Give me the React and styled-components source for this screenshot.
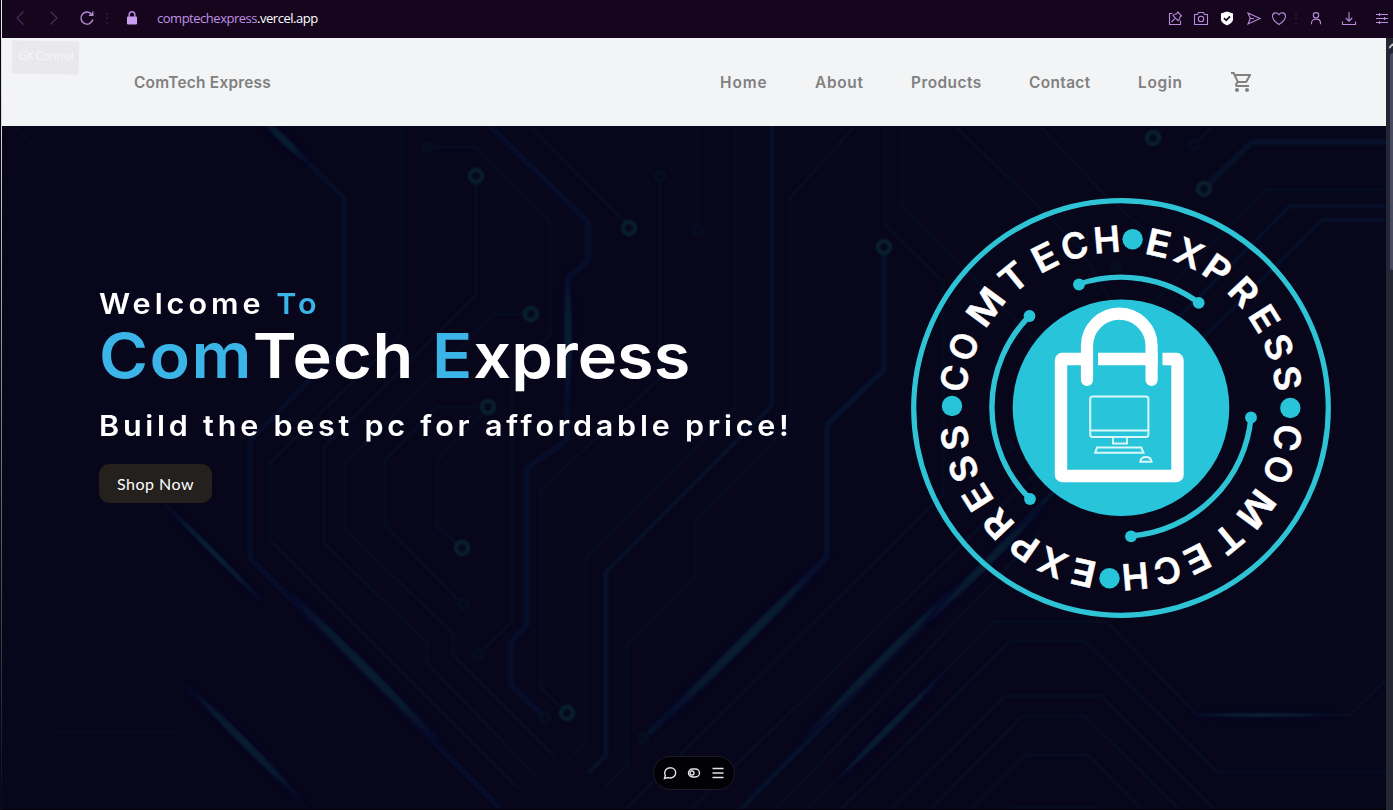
import React from "react";
import styled, { createGlobalStyle } from "styled-components";
import { MdOutlineShoppingCart } from "react-icons/md";

const GlobalStyle = createGlobalStyle`
  * { box-sizing: border-box; }
  body { margin: 0; background: #06051a; overflow: hidden; }
`;

const Window = styled.div`
  display: grid;
  grid-template-columns: 2px 1fr;
  width: 1393px;
  height: 810px;
  overflow: hidden;
  font-family: Inter, "Liberation Sans", sans-serif;
`;

const WindowEdge = styled.div`
  border-left: 1px solid #0b0614;
  background: linear-gradient(#e9e6ee 0, #d8d6dc 15%, #77757e 55%, #3b3944 80%, #0b0916 100%);
`;

const Browser = styled.div`
  display: flex;
  flex-direction: column;
  min-width: 0;
`;

const AddressBar = styled.header`
  display: flex;
  align-items: center;
  height: 38px;
  padding: 0 3px 2px 9.5px;
  background: #15061d;
`;

const BarIcon = styled.svg`
  flex: none;
  width: 16px;
  height: 16px;
  margin-left: ${(p) => p.$gap || 0}px;
  fill: none;
  stroke: ${(p) => p.$color || "#b88bdd"};
  stroke-width: 1.1;
`;

const Dots = styled.span`
  flex: none;
  width: 2px;
  height: 11px;
  margin-left: ${(p) => p.$gap}px;
  background: repeating-linear-gradient(#2c1040 0 2px, transparent 2px 4.5px);
`;

const Address = styled.div`
  flex: 1;
  margin-left: 17px;
  font: 400 13px/18px "Open Sans", "Noto Sans", sans-serif;
  letter-spacing: -0.48px;
  color: #c08fe6;
`;

const Domain = styled.span`
  color: #fff;
`;

const Viewport = styled.div`
  display: grid;
  grid-template-columns: 1384px 7px;
  flex: 1;
  min-height: 0;
`;

const Page = styled.div`
  position: relative;
  display: flex;
  flex-direction: column;
`;

const Scrollbar = styled.div`
  display: flex;
  flex-direction: column;
  align-items: flex-end;
  background: #232633;
`;

const ScrollArrow = styled.svg`
  width: 4px;
  height: 15px;
  fill: none;
  stroke: #c9c8c4;
  stroke-width: 1.8;
`;

const ScrollThumb = styled.div`
  width: 3px;
  height: 217px;
  border-radius: 3px 0 0 3px;
  background: #494b63;
`;

const Tooltip = styled.div`
  position: absolute;
  top: 3px;
  left: 10px;
  width: 67px;
  height: 33px;
  padding: 7px 6px;
  background: #e9e8ec;
  color: #f7f6f8;
  font: 400 12px/16px "Open Sans", sans-serif;
  letter-spacing: -0.5px;
  white-space: nowrap;
  transform: rotate(1deg);
`;

const NavBar = styled.nav`
  display: flex;
  align-items: center;
  justify-content: space-between;
  height: 88px;
  padding: 0 132px;
  background: #f3f4f6;
  color: #808080;
  font-size: 15.4px;
  font-weight: 600;
`;

const Brand = styled.div`
  letter-spacing: 0.25px;
`;

const Links = styled.div`
  display: flex;
  align-items: center;
  gap: 48px;
`;

const NavLink = styled.a`
  width: ${(p) => p.$width}px;
  white-space: nowrap;
  letter-spacing: ${(p) => p.$track}px;
`;

const Hero = styled.main`
  position: relative;
  display: flex;
  justify-content: space-between;
  flex: 1;
  padding: 70px 53px 0 97px;
  background: #07061a;
  border-bottom: 1px solid #030208;
  overflow: hidden;
`;

const Circuit = styled.svg`
  position: absolute;
  inset: 0;
  width: 1384px;
  height: 684px;
  fill: none;
  stroke: #080e24;
  stroke-width: 3;
  stroke-linejoin: round;
`;

const Intro = styled.section`
  position: relative;
  display: flex;
  flex-direction: column;
  align-items: flex-start;
  padding-top: 88px;
  color: #fff;
  font-weight: 600;
  white-space: nowrap;
`;

const Subheading = styled.p`
  margin: 0;
  font-size: 28.6px;
  line-height: 40px;
  letter-spacing: ${(p) => p.$track}px;
  transform: scaleX(1.067);
  transform-origin: left;
`;

const Title = styled.h1`
  margin: -1px 0 17px;
  font-size: 62.4px;
  line-height: 66px;
  font-weight: 600;
  letter-spacing: 0.9px;
  transform: scaleX(1.067);
  transform-origin: left;
`;

const Accent = styled.span`
  color: #3bb4e7;
  letter-spacing: ${(p) => (p.$wide ? "1.35px" : "inherit")};
`;

const Tight = styled.span`
  letter-spacing: 0;
`;

const ShopButton = styled.button`
  width: 113px;
  height: 39px;
  margin-top: 18px;
  padding: 0;
  border: 0;
  border-radius: 10px;
  background: #24201e;
  color: #fff;
  font: 400 16px Lato, sans-serif;
  letter-spacing: 0.5px;
`;

const Emblem = styled.svg`
  position: relative;
  flex: none;
  width: 424px;
  height: 424px;
`;

const RingLetter = styled.text`
  font: 600 36px Inter, sans-serif;
  fill: #fff;
  stroke: #fff;
  stroke-width: 0.5;
  stroke-linejoin: round;
  text-anchor: middle;
`;

const Toolbar = styled.div`
  position: absolute;
  left: 651px;
  bottom: 20px;
  display: flex;
  align-items: center;
  justify-content: center;
  gap: 10px;
  width: 82px;
  height: 34px;
  border: 1px solid #1d1b2a;
  border-radius: 17px;
  background: #020105;
`;

const ToolIcon = styled.svg`
  width: 14px;
  height: 14px;
  fill: none;
  stroke: #e4e4e4;
  stroke-width: 1.4;
`;

const TRACES = [
  { d: "M15 126L128 238V468L163 503L470 810", c: "#070b20" },
  { d: "M270 126L344 198V345L250 440V558L500 808", c: "#070e2a", w: 5 },
  { d: "M402 126V333L270 463V540L520 790" },
  { d: "M432 147H475L550 222V335L512 373V622L482 651" },
  { d: "M476 182V295L324 447V543L427 643V663L538 778" },
  { d: "M525 314H495L345 464V530L453 633V655L555 757" },
  { d: "M482 407H437L385 460V525L458 600" },
  { d: "M490 407L437 460V527L458 544" },
  { d: "M490 126L588 222V260L567 280V440L527 468V625L511 642V685L542 715", c: "#070e2a", w: 6 },
  { d: "M530 126L625 222" },
  { d: "M660 182V378L541 490V688L562 708" },
  { d: "M698 126V224" },
  { d: "M735 126V408L586 557V742L573 755" },
  { d: "M772 126V405L606 572V755L588 773", c: "#07122a", w: 4.5 },
  { d: "M855 126L790 198V425L695 520V577L627 645V765L605 788" },
  { d: "M884 253V370L827 425V557L648 734", c: "#06122c", w: 6 },
  { d: "M885 126V225L943 282V494L625 810" },
  { d: "M902 126V207L1090 395" },
  { d: "M955 126L1078 245L1110 300" },
  { d: "M1040 126L1100 190L1145 230" },
  { d: "M1090 420L690 810" },
  { d: "M1085 460L740 810", c: "#06122c", w: 5 },
  { d: "M1040 533L775 810" },
  { d: "M805 812L993 622H1107L1197 715H1350L1386 680" },
  { d: "M840 810L1010 641H1085L1217 772H1386", c: "#070e25" },
  { d: "M890 810L1005 696H1101L1215 810" },
  { d: "M930 810L1022 716H1085L1180 810" },
  { d: "M970 810L1025 755H1088L1142 810" },
  { d: "M1010 807H1095" },
  { d: "M1157 134L1165 126" },
  { d: "M1198 141L1213 126" },
  { d: "M1209 184L1252 142H1386", c: "#07122a", w: 6 },
  { d: "M1386 190H1265L1040 415" },
  { d: "M1386 206H1290L1050 446", c: "#07102a", w: 4 },
  { d: "M1386 220H1322L1140 400", c: "#07102a", w: 4 },
  { d: "M2 616H115L310 812", c: "#070a20" },
  { d: "M50 732H178L255 810", c: "#070a1d" },
];

const PADS = [
  [427, 147, 0], [476, 176, 1], [629, 228, 1], [660, 176, 0], [698, 230, 0],
  [531, 314, 1], [488, 407, 1], [462, 548, 1], [463, 604, 0], [478, 654, 0],
  [545, 718, 0], [567, 713, 1], [643, 738, 0], [884, 247, 1], [1153, 138, 1],
  [1194, 145, 0], [1204, 189, 1], [1008, 447, 0], [1116, 266, 0],
];

const GLOWS = [
  [213, 552, 62, 3, 45], [365, 668, 105, 4.5, 45], [245, 743, 75, 4, 45],
  [284, 140, 28, 4, 44], [568, 335, 60, 4, 90], [745, 640, 110, 5, -45],
  [880, 662, 105, 4, -45], [985, 565, 75, 4, -45], [890, 727, 70, 3.5, -45], [1262, 715, 65, 2.2, 0],
];

function Traces() {
  return (
    <Circuit viewBox="2 126 1384 684" aria-hidden="true">
      <defs>
        <filter id="soften" x="-5%" y="-5%" width="110%" height="110%" colorInterpolationFilters="sRGB">
          <feGaussianBlur stdDeviation="1" />
        </filter>
        <filter id="haze" filterUnits="userSpaceOnUse" x="-150" y="-20" width="300" height="40" colorInterpolationFilters="sRGB">
          <feGaussianBlur stdDeviation="2.5" />
        </filter>
        <radialGradient id="beam">
          <stop offset="0" stopColor="#08202f" />
          <stop offset="0.55" stopColor="#081b2e" stopOpacity="0.85" />
          <stop offset="1" stopColor="#07102c" stopOpacity="0" />
        </radialGradient>
      </defs>
      <g filter="url(#soften)">
        {TRACES.map((t) => (
          <path key={t.d} d={t.d} stroke={t.c} strokeWidth={t.w} />
        ))}
      </g>
      {GLOWS.map(([x, y, rx, ry, a]) => (
        <g key={`${x}-${y}`} transform={`translate(${x} ${y}) rotate(${a})`} stroke="none">
          <ellipse rx={rx * 1.1} ry={ry * 1.7} fill="#06042c" opacity="0.45" filter="url(#haze)" />
          <ellipse rx={rx * 1.15} ry={ry * 1.3} fill="url(#beam)" />
        </g>
      ))}
      <g filter="url(#soften)">
        {PADS.map(([x, y, lit]) => (
          <circle key={`${x}-${y}`} cx={x} cy={y} r={lit ? 6.2 : 5} fill="#050a1b"
            stroke={lit ? "#0a2032" : "#090f26"} strokeWidth={lit ? 4 : 2.5} />
        ))}
      </g>
    </Circuit>
  );
}

// Letter, angle in degrees clockwise from the top, horizontal stretch.
const HALF_RING = [
  ["C", -79.8, 1], ["O", -68.6, 0.98], ["M", -53.2, 1.14], ["T", -39.4, 1.08], ["E", -26.8, 1.12],
  ["C", -16, 1], ["H", -4.8, 1], ["E", 12.8, 1.12], ["X", 23.9, 1.05], ["P", 34.8, 1.08],
  ["R", 46.6, 1.08], ["E", 58, 1.1], ["S", 68.8, 1.05], ["S", 79.8, 1.05],
];

function Logo() {
  return (
    <Emblem viewBox="909 196 424 424" role="img" aria-label="ComTech Express">
      <circle cx="1121" cy="408" r="207.3" fill="none" stroke="#2ec4d6" strokeWidth="5.2" />
      <g fill="none" stroke="#2ec4d6" strokeWidth="5.4">
        <path d="M1079 284A131 131 0 0 1 1199 303" />
        <path d="M1029.500 316A129.500 129.500 0 0 0 1030 499" />
        <path d="M1251 417A131 131 0 0 1 1131 536" />
      </g>
      <g fill="#28c5da">
        {[[1079, 284.5], [1198.7, 302.8], [1029.5, 316], [1030, 499], [1251, 417.5], [1131, 536.3]].map(([x, y]) => (
          <circle key={x} cx={x} cy={y} r="5.900" />
        ))}
        {[[1132.6, 239.3], [1290.3, 408], [1109.5, 578.3], [952, 406]].map(([x, y]) => (
          <circle key={x} cx={x} cy={y} r="10.200" />
        ))}
        <circle cx="1121" cy="407.700" r="108.300" />
      </g>
      {[0, 180].map((turn) =>
        HALF_RING.map(([letter, angle, stretch]) => (
          <RingLetter
            key={turn + angle}
            transform={`translate(1121 408) rotate(${turn + angle}) translate(0 -156) scale(${stretch} 1)`}
          >
            {letter}
          </RingLetter>
        ))
      )}
      <rect x="1061" y="359" width="116.500" height="117" rx="1" fill="none" stroke="#fff" strokeWidth="12.400" strokeLinejoin="round" />
      <path d="M1095.500 350V368M1160 350V368" stroke="#28c5da" strokeWidth="5" />
      <path d="M1087 380V346A32.300 32.300 0 0 1 1151.600 346V380" fill="none" stroke="#fff" strokeWidth="12.200" strokeLinecap="round" />
      <g fill="none" stroke="#d9f8fb" strokeWidth="2">
        <rect x="1090.200" y="396.500" width="58.200" height="40.500" rx="2.500" />
        <path d="M1090 430.500H1148.500M1113 437.500V443.500H1127V437.500M1097 447.500H1141.300L1143.500 452.800H1095.200Z" />
        <path d="M1140.300 461.700C1141 455.500 1151 455.500 1151.500 461.700Z" />
      </g>
    </Emblem>
  );
}

export default function App() {
  return (
    <Window>
      <GlobalStyle />
      <WindowEdge />
      <Browser>
        <AddressBar>
          <BarIcon $color="#4c2b60" viewBox="0 0 16 16"><path d="M11.500 1.500L5 8L11.500 14.500" /></BarIcon>
          <BarIcon $gap={18} $color="#4c2b60" viewBox="0 0 16 16"><path d="M4.500 1.500L11 8L4.500 14.500" /></BarIcon>
          <BarIcon $gap={17} viewBox="0 0 16 16"><path strokeWidth="1.400" d="M13.800 9.500A6 6 0 1 1 12.800 4.500M13.800 1.500V5.300H10" /></BarIcon>
          <Dots $gap={11.5} />
          <BarIcon $gap={16} viewBox="0 0 16 16"><rect x="3.500" y="7" width="9" height="7" rx=".8" fill="#ca9df0" stroke="#ca9df0" /><path strokeWidth="1.500" d="M5.200 7V4.500A2.800 2.800 0 0 1 10.800 4.500V7" /></BarIcon>
          <Address>comptechexpress<Domain>.vercel.app</Domain></Address>
          <BarIcon viewBox="0 0 16 16"><path d="M5.500 3.500H2.500V14.500H13.500V10.500M10.800 2L14.500 5.800L13 6.800L12.500 9L11 10.600L6 5.600L7.600 4.200L9.800 3.800ZM8.300 8.200L4.500 12" /></BarIcon>
          <BarIcon $gap={10} viewBox="0 0 16 16"><path d="M1.500 4.500H4.500L5.500 2.500H10.500L11.500 4.500H14.500V14.500H1.500Z" /><circle cx="8" cy="9" r="2.700" /></BarIcon>
          <BarIcon $gap={10} viewBox="0 0 16 16"><path fill="#fff" stroke="#fff" d="M8 2L13.500 3.800V9C13.500 12 11 13.600 8 14.700C5 13.600 2.500 12 2.500 9V3.800Z" /><path stroke="#15061d" strokeWidth="1.700" d="M5 8.200L7.200 10.300L11 6.300" /></BarIcon>
          <BarIcon $gap={10.5} viewBox="0 0 16 16"><path d="M2 3L14 8.500L2 14L4.300 8.500ZM4.300 8.500H8" /></BarIcon>
          <BarIcon $gap={9.5} viewBox="0 0 16 16"><path d="M8 14.500C5 12.500 1.500 9.500 1.500 6.200C1.500 2.500 6 1.500 8 4.800C10 1.500 14.500 2.500 14.500 6.200C14.500 9.500 11 12.500 8 14.500Z" /></BarIcon>
          <Dots $gap={8} />
          <BarIcon $gap={11} viewBox="0 0 16 16"><circle cx="8" cy="5.300" r="2.700" /><path d="M3.500 14.300V13C3.500 7.800 12.500 7.800 12.500 13V14.300" /></BarIcon>
          <BarIcon $gap={16.5} viewBox="0 0 16 16"><path d="M8 2V11M4.800 8L8 11.200L11.200 8M1.500 11.500V14.500H14.500V11.500" /></BarIcon>
          <BarIcon $gap={17.5} viewBox="0 0 16 16"><path d="M2 4.500H14M2 8.500H14M2 12.500H14M5.500 3V6M10.500 7V10M5.500 11V14" /></BarIcon>
        </AddressBar>
        <Viewport>
          <Page>
            <NavBar>
              <Brand>ComTech Express</Brand>
              <Links>
                <NavLink $width={47} $track={0.95}>Home</NavLink>
                <NavLink $width={48} $track={0.7}>About</NavLink>
                <NavLink $width={70} $track={0.48}>Products</NavLink>
                <NavLink $width={61} $track={0.38}>Contact</NavLink>
                <NavLink $width={44} $track={0.72}>Login</NavLink>
                <MdOutlineShoppingCart size={24} />
              </Links>
            </NavBar>
            <Tooltip>GX Control</Tooltip>
            <Hero>
              <Traces />
              <Intro>
                <Subheading $track={3.75}>Welcome <Accent>To</Accent></Subheading>
                <Title><Accent $wide>Com</Accent>Tech <Accent>E</Accent><Tight>xpress</Tight></Title>
                <Subheading $track={3.53}>Build the best pc for affordable price!</Subheading>
                <ShopButton>Shop Now</ShopButton>
              </Intro>
              <Logo />
            </Hero>
            <Toolbar>
              <ToolIcon viewBox="0 0 14 14"><path d="M1.500 12.500L2.300 9.500C.5 5.500 3 1.700 7.200 1.700C10.500 1.700 12.700 4 12.700 6.800C12.700 10.500 8.500 13 5 11.600Z" /></ToolIcon>
              <ToolIcon viewBox="0 0 14 14"><rect x="1.500" y="3" width="11" height="8" rx="4" /><circle cx="5" cy="7" r="2" /></ToolIcon>
              <ToolIcon viewBox="0 0 14 14"><path d="M1.500 2.500H12.500M1.500 7H12.500M1.500 11.500H12.500" /></ToolIcon>
            </Toolbar>
          </Page>
          <Scrollbar>
            <ScrollArrow viewBox="0 0 4 15"><path d="M0 10L4 6" /></ScrollArrow>
            <ScrollThumb />
          </Scrollbar>
        </Viewport>
      </Browser>
    </Window>
  );
}
